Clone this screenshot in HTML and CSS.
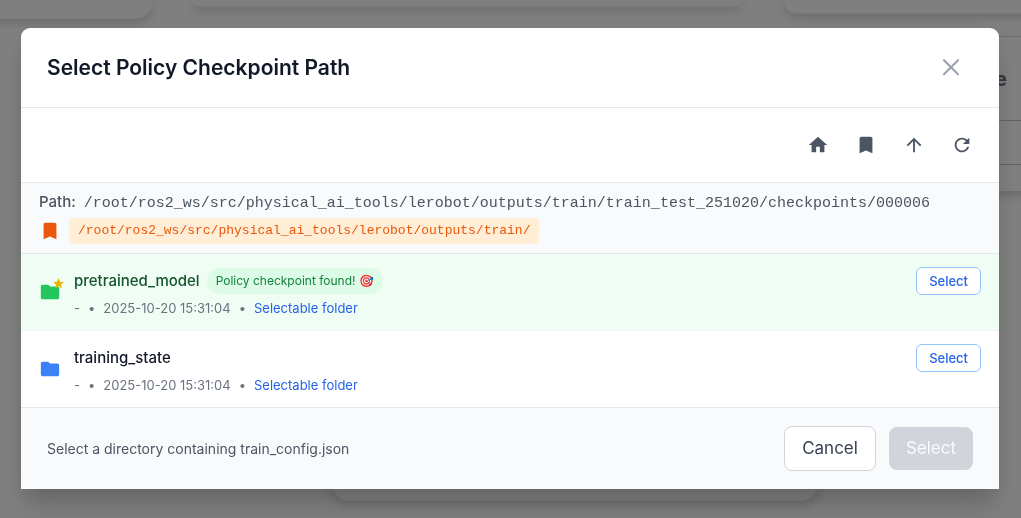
FILE: index.html
```html
<!DOCTYPE html>
<html lang="en">
<head>
<meta charset="utf-8">
<meta name="viewport" content="width=device-width, initial-scale=1">
<title>Select Policy Checkpoint Path</title>
<link rel="stylesheet" href="styles.css">
</head>
<body>
<div class="page" aria-hidden="true">
  <div class="page-top">
    <div class="card card-left"></div>
    <div class="card card-middle"></div>
    <div class="page-side">
      <div class="card card-right"></div>
      <div class="panel">
        <div class="panel-title">e</div>
        <div class="panel-row"></div>
        <div class="panel-end"></div>
      </div>
    </div>
  </div>
  <div class="card card-bottom"></div>
</div>
<div class="overlay">
  <div class="modal" role="dialog" aria-modal="true" aria-labelledby="dialog-title">
    <header class="modal-header">
      <h2 class="modal-title" id="dialog-title">Select Policy Checkpoint Path</h2>
      <button class="close" type="button" aria-label="Close">
        <svg viewBox="0 0 24 24" fill="none" stroke="currentColor" stroke-width="2" stroke-linecap="round"><path d="M5.500 4.800l13 13M18.500 4.800l-13 13"/></svg>
      </button>
    </header>
    <div class="toolbar">
      <button class="tool" type="button" aria-label="Home"><svg viewBox="0 0 24 24" fill="currentColor"><path d="M10 20v-6h4v6h5v-8h3L12 3 2 12h3v8z"/></svg></button>
      <button class="tool" type="button" aria-label="Bookmark"><svg viewBox="0 0 24 24" fill="currentColor"><path d="M17 3H7c-1.100 0-2 .9-2 2v16l7-3 7 3V5c0-1.100-.9-2-2-2z"/></svg></button>
      <button class="tool" type="button" aria-label="Parent folder"><svg viewBox="0 0 24 24" fill="currentColor"><path d="M4 12l1.410 1.410L11 7.830V20h2V7.830l5.580 5.590L20 12l-8-8-8 8z"/></svg></button>
      <button class="tool" type="button" aria-label="Refresh"><svg viewBox="0 0 24 24" fill="currentColor"><path d="M17.650 6.350A7.958 7.958 0 0012 4c-4.420 0-7.990 3.580-7.990 8s3.570 8 7.990 8c3.730 0 6.840-2.550 7.730-6h-2.080A5.990 5.990 0 0112 18c-3.310 0-6-2.690-6-6s2.690-6 6-6c1.660 0 3.140.69 4.220 1.780L13 11h7V4l-2.350 2.350z"/></svg></button>
    </div>
    <section class="location">
      <div class="path"><span class="path-label">Path:</span><span class="path-value">/root/ros2_ws/src/physical_ai_tools/lerobot/outputs/train/train_test_251020/checkpoints/000006</span></div>
      <div class="bookmark">
        <svg class="bookmark-icon" viewBox="0 0 24 24" fill="currentColor"><path d="M17 3H7c-1.100 0-2 .9-2 2v16l7-3 7 3V5c0-1.100-.9-2-2-2z"/></svg>
        <button class="bookmark-path" type="button">/root/ros2_ws/src/physical_ai_tools/lerobot/outputs/train/</button>
      </div>
    </section>
    <ul class="list">
      <li class="item item-found">
        <div class="folder folder-found">
          <svg viewBox="0 0 24 24" fill="currentColor"><path d="M10 4H4c-1.100 0-1.990.9-1.990 2L2 18c0 1.100.9 2 2 2h16c1.100 0 2-.9 2-2V8c0-1.100-.9-2-2-2h-8l-2-2z"/></svg>
          <svg class="star" viewBox="0 0 24 24" fill="currentColor"><path d="M12 17.270L18.180 21l-1.640-7.030L22 9.240l-7.190-.61L12 2 9.190 8.630 2 9.240l5.460 4.730L5.820 21z"/></svg>
        </div>
        <div class="details">
          <div class="name-row"><span class="name">pretrained_model</span><span class="badge">Policy checkpoint found! 🎯</span></div>
          <div class="meta"><span>-</span><span>•</span><span>2025-10-20 15:31:04</span><span>•</span><span class="kind">Selectable folder</span></div>
        </div>
        <button class="pick" type="button">Select</button>
      </li>
      <li class="item">
        <div class="folder">
          <svg viewBox="0 0 24 24" fill="currentColor"><path d="M10 4H4c-1.100 0-1.990.9-1.990 2L2 18c0 1.100.9 2 2 2h16c1.100 0 2-.9 2-2V8c0-1.100-.9-2-2-2h-8l-2-2z"/></svg>
        </div>
        <div class="details">
          <div class="name-row"><span class="name">training_state</span></div>
          <div class="meta"><span>-</span><span>•</span><span>2025-10-20 15:31:04</span><span>•</span><span class="kind">Selectable folder</span></div>
        </div>
        <button class="pick" type="button">Select</button>
      </li>
    </ul>
    <footer class="modal-footer">
      <p class="hint">Select a directory containing train_config.json</p>
      <button class="button cancel" type="button">Cancel</button>
      <button class="button confirm" type="button" disabled>Select</button>
    </footer>
  </div>
</div>
</body>
</html>
```
FILE: styles.css
```css
* { box-sizing: border-box; }
body {
  margin: 0;
  background: #fff;
  color: #111827;
  font-family: Inter, "Liberation Sans", sans-serif;
  font-size: 15px;
  line-height: 22px;
}
button { font: inherit; color: inherit; margin: 0; padding: 0; border: 0; background: none; cursor: pointer; }
svg { display: block; }

/* Content behind the dialog */
.page { display: flex; flex-direction: column; height: 100vh; overflow: hidden; }
.page-top { display: flex; align-items: flex-start; }
.card { background: #fff; border: 1px solid #f3f4f6; border-top: 0; border-radius: 0 0 18px 18px; box-shadow: 0 4px 10px rgba(0, 0, 0, 0.16); }
.card-left { width: 173px; height: 19px; margin-left: -20px; margin-right: 38px; }
.card-middle { flex: 1; height: 7px; margin-right: 40px; }
.page-side { width: 238px; }
.card-right { width: 280px; height: 14px; }
.panel { width: 280px; margin-top: 22px; border: 1px solid #e0e0e0; border-radius: 8px; box-shadow: 0 4px 10px rgba(0, 0, 0, 0.16); }
.panel-title { padding: 30px 0 29px 211px; font-size: 20px; line-height: 24px; font-weight: 700; color: #6b7280; }
.panel-row { height: 45px; border: 1px solid #c4c6ca; border-width: 1px 0; }
.panel-end { height: 26px; }
.card-bottom { height: 60px; margin: auto 202px 17px 331px; }

/* Dialog */
.overlay { position: fixed; inset: 0; padding: 28px 22px 0 21px; background: rgba(0, 0, 0, 0.5); }
.modal { background: #fff; border-radius: 9px 9px 0 0; box-shadow: 0 22px 27px -5px rgba(0, 0, 0, 0.15), 0 8px 20px rgba(0, 0, 0, 0.08); }
.modal-header { display: flex; align-items: center; justify-content: space-between; padding: 26px 35px 25px 26px; border-bottom: 1px solid #e5e7eb; }
.modal-title { margin: 0; font-size: 21px; line-height: 28px; font-weight: 600; }
.close { color: #9ca3af; }
.close svg { width: 26px; height: 26px; }
.toolbar { display: flex; justify-content: flex-end; gap: 8px; padding: 17px; border-bottom: 1px solid #e5e7eb; color: #4b5563; }
.tool { display: grid; place-items: center; width: 40px; height: 40px; }
.tool svg { width: 22px; height: 22px; }
.location { padding: 8px 18px 9px; background: #f9fafb; border-bottom: 1px solid #e5e7eb; color: #4b5563; }
.path { display: flex; align-items: baseline; gap: 8px; }
.path-label { font-weight: 500; }
.path-value, .bookmark-path { font-family: "Liberation Mono", monospace; }
.bookmark { display: flex; align-items: center; gap: 8px; margin-top: 3px; color: #ea580c; }
.bookmark-icon { width: 22px; height: 22px; }
.bookmark-path { padding: 3px 9px; border-radius: 4px; background: #ffedd5; font-size: 13px; line-height: 20px; }

.list { margin: 0; padding: 0; list-style: none; }
.item { display: flex; align-items: flex-start; gap: 13px; padding: 13px 18px; }
.item-found { background: #f0fdf4; border-bottom: 1px solid #f3f4f6; }
.folder { position: relative; align-self: center; color: #3b82f6; }
.folder svg { width: 22px; height: 22px; }
.folder-found { color: #22c55e; }
.folder .star { position: absolute; top: -4px; right: -4px; width: 13px; height: 13px; color: #eab308; }
.details { flex: 1; }
.name-row { display: flex; align-items: center; gap: 7px; min-height: 28px; }
.name { font-weight: 500; }
.item-found .name { color: #14532d; }
.badge { padding: 3px 9px; border-radius: 13px; background: #dcfce7; color: #15803d; font-size: 12px; line-height: 20px; }
.meta { display: flex; gap: 8px; margin-top: 4px; color: #6b7280; font-size: 13px; line-height: 18px; }
.kind { color: #2563eb; }
.pick { padding: 4px 12px; border: 1px solid #93c5fd; border-radius: 6px; background: #fff; color: #2563eb; font-size: 13px; line-height: 18px; font-weight: 500; }

.modal-footer { display: flex; align-items: center; gap: 13px; padding: 18px 26px; background: #f9fafb; border-top: 1px solid #e5e7eb; }
.hint { flex: 1; margin: 0; color: #4b5563; font-size: 14px; }
.button { padding: 9px 17px; border-radius: 8px; font-size: 17px; line-height: 25px; }
.cancel { border: 1px solid #d1d5db; background: #fff; color: #374151; }
.confirm { background: #d1d5db; color: #f9fafb; cursor: not-allowed; }
```
